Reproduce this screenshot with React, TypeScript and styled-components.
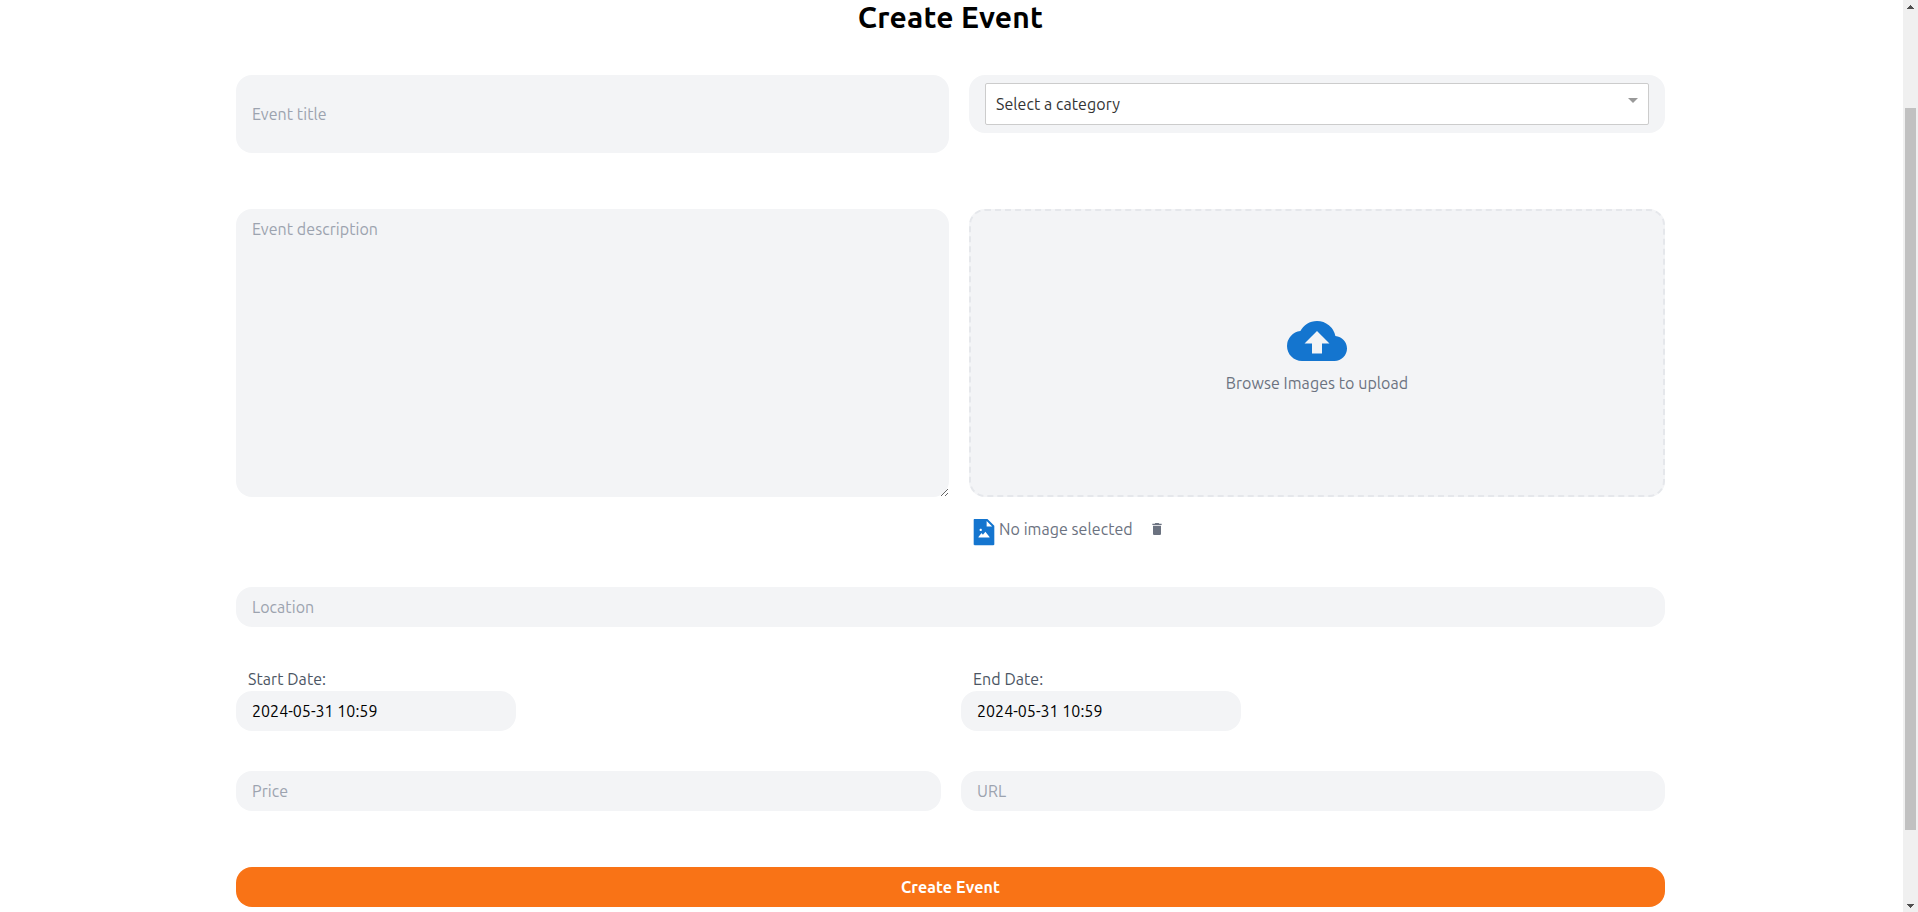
import React from "react";
import styled, { createGlobalStyle, css } from "styled-components";
import { MdCloudUpload, MdDelete } from "react-icons/md";
import { AiFillFileImage } from "react-icons/ai";

const GlobalStyle = createGlobalStyle`
  *, *::before, *::after { box-sizing: border-box; }
  body {
    margin: 0;
    background: #fff;
    overflow: hidden;
    font-family: Ubuntu, "Noto Sans", sans-serif;
    font-size: 16px;
    line-height: 24px;
    letter-spacing: 0.06px;
  }
  input, textarea, button { font: inherit; letter-spacing: inherit; margin: 0; border: 0; outline: 0; }
`;

const Viewport = styled.div`
  display: flex;
  height: 912px;
  overflow: hidden;
`;

const Main = styled.main`
  flex: 1;
  padding: 0 238px 0 236px;
`;

const Heading = styled.h1`
  margin: 0;
  height: 75px;
  font-size: 30px;
  line-height: 34px;
  font-weight: 700;
  text-align: center;
  letter-spacing: 0.2px;
  color: #000;
`;

const Form = styled.form`
  display: flex;
  flex-direction: column;
`;

const Row = styled.div<{ $columns: string; $top?: number }>`
  display: grid;
  grid-template-columns: ${(p) => p.$columns};
  column-gap: 20px;
  align-items: start;
  margin-top: ${(p) => p.$top ?? 0}px;
`;

const fieldStyle = css`
  width: 100%;
  border-radius: 16px;
  background: #f3f4f6;
  color: #000;
  padding: 8px 16px;
  &::placeholder { color: #9ca3af; opacity: 1; }
`;

const Field = styled.input<{ $height?: number; $width?: number }>`
  ${fieldStyle}
  display: block;
  height: ${(p) => p.$height ?? 40}px;
  width: ${(p) => (p.$width ? `${p.$width}px` : "100%")};
`;

const Description = styled.textarea`
  ${fieldStyle}
  display: block;
  height: 288px;
`;

const CategoryBox = styled.div`
  ${fieldStyle}
`;

const Select = styled.div`
  display: flex;
  justify-content: space-between;
  height: 42px;
  padding: 8px 10px;
  border: 1px solid #ccc;
  border-radius: 2px;
  background: #fff;
  color: #333;
`;

const Caret = styled.span`
  margin-top: 6px;
  height: 0;
  border: 5px solid transparent;
  border-top-color: #999;
  border-bottom-width: 0;
`;

const DropZone = styled.div`
  display: flex;
  flex-direction: column;
  align-items: center;
  height: 288px;
  padding-top: 100px;
  border: 2px dashed #e5e7eb;
  border-radius: 16px;
  background: #f3f4f6;
  color: #6b7280;
`;

const FileStatus = styled.div`
  display: flex;
  align-items: flex-start;
  height: 70px;
  margin-top: 20px;
  color: #6b7280;
`;

const FileLabel = styled.span`
  width: 150px;
`;

const DeleteIcon = styled(MdDelete)`
  margin-top: 4px;
`;

const Label = styled.label`
  display: block;
  padding-left: 12px;
  color: #4b5563;
`;

const DateRow = styled(Row)`
  column-gap: 0;
`;

const DateField = styled(Field)`
  letter-spacing: 0.02px;
`;

const Submit = styled.button`
  height: 40px;
  margin-top: 56px;
  border-radius: 16px;
  background: #f97316;
  color: #fff;
  font-weight: 700;
  letter-spacing: 0.12px;
`;

const Scrollbar = styled.div`
  display: flex;
  flex-direction: column;
  align-items: center;
  width: 15px;
  height: 912px;
  padding-top: 5px;
  background: #f0f0f0;
`;

const ScrollArrow = styled.svg`
  display: block;
  width: 7px;
  height: 4px;
  fill: #505050;
`;

const Thumb = styled.div`
  width: 11px;
  height: 722px;
  margin: 99px 0 74px;
  background: #c1c1c1;
`;

export default function App() {
  return (
    <>
      <GlobalStyle />
      <Viewport>
        <Main>
          <Heading>Create Event</Heading>
          <Form>
            <Row $columns="713px 1fr">
              <Field $height={78} placeholder="Event title" />
              <CategoryBox>
                <Select>
                  <span>Select a category</span>
                  <Caret />
                </Select>
              </CategoryBox>
            </Row>
            <Row $columns="713px 1fr" $top={56}>
              <Description placeholder="Event description" />
              <div>
                <DropZone>
                  <MdCloudUpload size={60} color="#1475cf" />
                  <span>Browse Images to upload</span>
                </DropZone>
                <FileStatus>
                  <AiFillFileImage size={30} color="#1475cf" />
                  <FileLabel>No image selected</FileLabel>
                  <DeleteIcon size={16} />
                </FileStatus>
              </div>
            </Row>
            <Field placeholder="Location" />
            <DateRow $columns="725px 1fr" $top={40}>
              <div>
                <Label>Start Date:</Label>
                <DateField $width={280} defaultValue="2024-05-31 10:59" />
              </div>
              <div>
                <Label>End Date:</Label>
                <DateField $width={280} defaultValue="2024-05-31 10:59" />
              </div>
            </DateRow>
            <Row $columns="705px 1fr" $top={40}>
              <Field placeholder="Price" />
              <Field placeholder="URL" />
            </Row>
            <Submit type="button">Create Event</Submit>
          </Form>
        </Main>
        <Scrollbar>
          <ScrollArrow viewBox="0 0 7 4" shapeRendering="crispEdges">
            <path d="M3 0h1v1h1v1h1v1h1v1H0V3h1V2h1V1h1z" />
          </ScrollArrow>
          <Thumb />
          <ScrollArrow viewBox="0 0 7 4" shapeRendering="crispEdges">
            <path d="M0 0h7v1H6v1H5v1H4v1H3V3H2V2H1V1H0z" />
          </ScrollArrow>
        </Scrollbar>
      </Viewport>
    </>
  );
}
